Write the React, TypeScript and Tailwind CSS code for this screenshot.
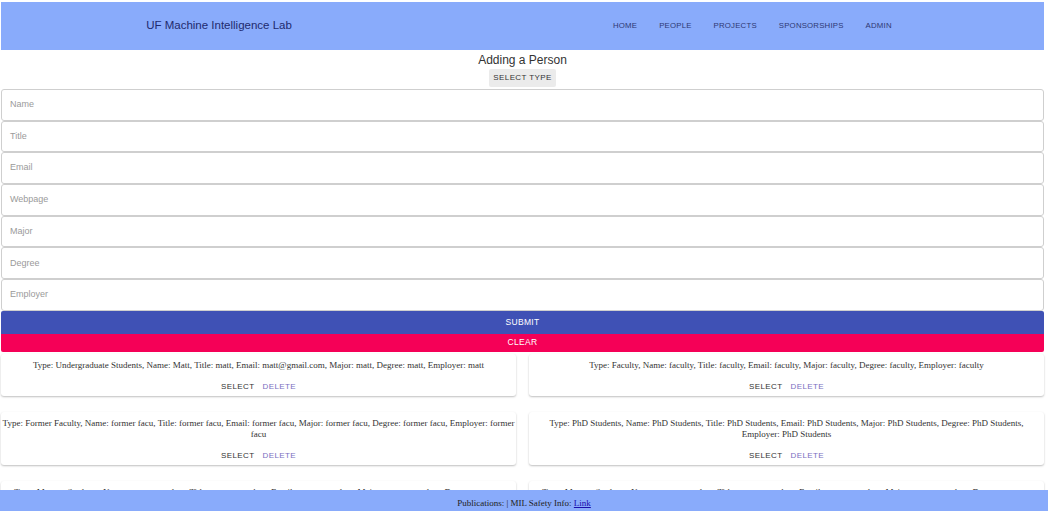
import React from 'react';

const navLinks = ['Home', 'People', 'Projects', 'Sponsorships', 'Admin'];
const fields = ['Name', 'Title', 'Email', 'Webpage', 'Major', 'Degree', 'Employer'];

const people = [
  'Type: Undergraduate Students, Name: Matt, Title: matt, Email: matt@gmail.com, Major: matt, Degree: matt, Employer: matt',
  'Type: Faculty, Name: faculty, Title: faculty, Email: faculty, Major: faculty, Degree: faculty, Employer: faculty',
  'Type: Former Faculty, Name: former facu, Title: former facu, Email: former facu, Major: former facu, Degree: former facu, Employer: former facu',
  'Type: PhD Students, Name: PhD Students, Title: PhD Students, Email: PhD Students, Major: PhD Students, Degree: PhD Students, Employer: PhD Students',
  'Type: Masters Students, Name: masters student, Title: masters student, Email: masters student, Major: masters student, Degree: masters student, Employer: masters',
  'Type: Masters Students, Name: masters student, Title: masters student, Email: masters student, Major: masters student, Degree: masters student, Employer: masters',
];

function PersonCard({ text }: { text: string }) {
  return (
    <div className="bg-white rounded-[3px] shadow-[0_1px_2px_rgba(0,0,0,0.25)] pt-[6px]">
      <p className="px-[1px] text-center text-[9px] leading-[11px] text-[#333] font-['Liberation_Serif',serif]">
        {text}
      </p>
      <div className="mt-[7px] h-[18px] flex items-center justify-center gap-[8px] text-[8px] tracking-[0.4px] font-['Liberation_Sans',sans-serif]">
        <button className="text-[#333]">SELECT</button>
        <button className="text-[#7a6fbf]">DELETE</button>
      </div>
    </div>
  );
}

export default function App() {
  return (
    <div className="min-h-screen bg-white pt-[2px] pl-[1px] pr-[4px] pb-[40px] font-['Liberation_Sans',sans-serif]">
      {/* top bar */}
      <header className="h-[48px] bg-[#89abfb] flex items-center">
        <div className="w-[436px] text-center text-[11.5px] text-[#1e2a6e]">
          UF Machine Intelligence Lab
        </div>
        <nav className="ml-[176px] flex gap-[22px] text-[7.8px] tracking-[0.2px] text-[#2e3873] uppercase">
          {navLinks.map((l) => (
            <a key={l} href="#">{l}</a>
          ))}
        </nav>
      </header>

      {/* form */}
      <div className="h-[19px] pt-[3px] text-center text-[12px] leading-[14px] text-[#333]">Adding a Person</div>
      <div className="flex justify-center h-[20px]">
        <button className="px-[4px] h-[18px] bg-[#ebebeb] rounded-[2px] text-[8px] tracking-[0.4px] text-[#333]">
          SELECT TYPE
        </button>
      </div>
      <div>
        {fields.map((f) => (
          <div
            key={f}
            className="h-[31.7px] border border-[#cfcfcf] rounded-[3px] flex items-center px-[8px] text-[9px] text-[#9a9a9a]"
          >
            {f}
          </div>
        ))}
      </div>
      <button className="block w-full h-[23px] bg-[#3f51b5] text-white text-[8.5px] tracking-[0.3px] rounded-t-[2px]">SUBMIT</button>
      <button className="block w-full h-[18px] bg-[#f50057] text-white text-[8.5px] tracking-[0.3px] rounded-b-[2px]">CLEAR</button>

      {/* people list */}
      <div className="grid grid-cols-2 gap-x-[13px] gap-y-[16px] mt-[2px]">
        {people.map((p, i) => (
          <PersonCard key={i} text={p} />
        ))}
      </div>

      {/* footer */}
      <footer className="fixed bottom-0 left-0 right-0 h-[21px] bg-[#89abfb] text-center text-[9px] leading-[10px] pt-[8px] text-[#222] font-['Liberation_Serif',serif]">
        Publications: | MIL Safety Info:{' '}
        <a href="#" className="text-[#1a0dab] underline">Link</a>
      </footer>
    </div>
  );
}
